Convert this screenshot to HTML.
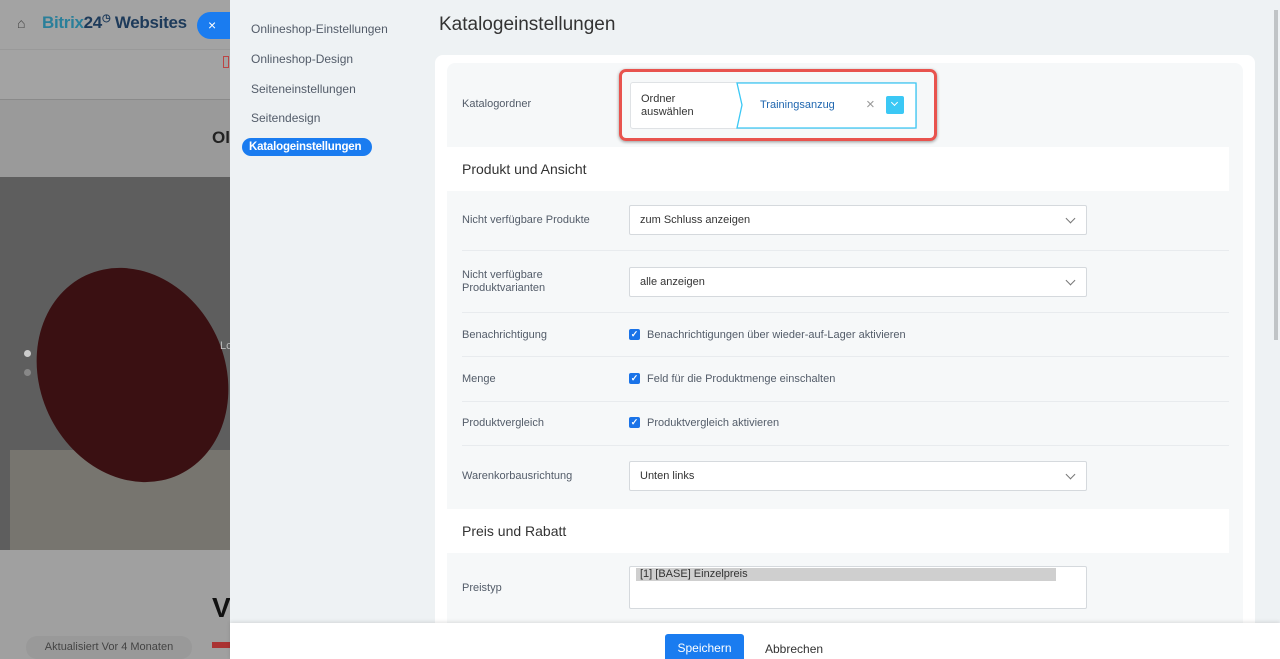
<!DOCTYPE html>
<html><head><meta charset="utf-8"><style>
*{box-sizing:border-box;margin:0;padding:0}
html,body{width:1280px;height:659px;overflow:hidden}
body{position:relative;font-family:"Liberation Sans",sans-serif;background:#9a9a9a}
.a{position:absolute}
.lbl{position:absolute;left:462px;font-size:11px;color:#535c69}
.sel{position:absolute;left:629px;width:458px;height:30px;background:#fff;border:1px solid #d5d9dd;border-radius:2px;font-size:11px;color:#333;padding:0 10px;line-height:28px}
.sel:after{content:"";position:absolute;right:12px;top:9px;width:6px;height:6px;border-right:1.3px solid #777;border-bottom:1.3px solid #777;transform:rotate(45deg)}
.hr{position:absolute;left:462px;width:767px;height:1px;background:#e8ebee}
.cb{position:absolute;left:629px;font-size:11px;color:#535c69;padding-left:18px}
.cb:before{content:"✓";position:absolute;left:0;top:0px;width:11px;height:11px;background:#1a73e8;border-radius:2px;color:#fff;font-size:9px;line-height:11px;text-align:center;font-weight:bold}
.nav{position:absolute;left:251px;font-size:12px;color:#535c69}
.hd{position:absolute;left:447px;width:782px;height:44px;background:#fff;font-size:14px;color:#333;padding-left:15px;line-height:44px}
</style></head><body>
<div class="a" style="left:0;top:0;width:230px;height:100px;background:#a3a3a3"></div>
<div class="a" style="left:0;top:49px;width:230px;height:1px;background:#999"></div>
<div class="a" style="left:0;top:99px;width:230px;height:1px;background:#8a8a8a"></div>
<div class="a" style="left:17px;top:15px;font-size:14px;color:#444">&#8962;</div>
<div class="a" style="left:42px;top:13px;font-size:17px;font-weight:bold;color:#2a7f9a;white-space:nowrap;letter-spacing:-0.3px">Bitrix<span style="color:#1d3a5a">24</span><span style="font-size:10px;vertical-align:top;color:#1d3a5a">&#9719;</span> <span style="color:#1d3a5a">Websites</span></div>
<div class="a" style="left:197px;top:12px;width:40px;height:27px;border-radius:14px 0 0 14px;background:#1a7cf0;color:#fff;font-size:14px;line-height:27px;padding-left:11px">×</div>
<div class="a" style="left:223px;top:56px;width:6px;height:12px;border:1px solid #b44"></div>
<div class="a" style="left:212px;top:128px;font-size:17px;font-weight:bold;color:#222">Ol</div>
<div class="a" style="left:0;top:177px;width:230px;height:373px;background:#5e5e5e"></div>
<div class="a" style="left:10px;top:450px;width:220px;height:100px;background:#77756f"></div>
<div class="a" style="left:40px;top:265px;width:185px;height:220px;border-radius:50%;background:#3a1012;transform:rotate(-25deg)"></div>
<div class="a" style="left:24px;top:350px;width:7px;height:7px;border-radius:50%;background:#ccc"></div>
<div class="a" style="left:24px;top:369px;width:7px;height:7px;border-radius:50%;background:#888"></div>
<div class="a" style="left:220px;top:340px;font-size:11px;color:#bbb">Lc</div>
<div class="a" style="left:0;top:550px;width:230px;height:109px;background:#a0a0a0"></div>
<div class="a" style="left:212px;top:592px;font-size:28px;font-weight:bold;color:#111">V</div>
<div class="a" style="left:26px;top:636px;width:166px;height:23px;border-radius:11px;background:#999;font-size:11px;color:#444;text-align:center;line-height:23px">Aktualisiert Vor 4 Monaten</div>
<div class="a" style="left:212px;top:642px;width:18px;height:6px;background:#a33"></div>
<div class="a" style="left:230px;top:0;width:1050px;height:659px;background:#eef2f4"></div>
<div class="nav" style="top:22px">Onlineshop-Einstellungen</div>
<div class="nav" style="top:52px">Onlineshop-Design</div>
<div class="nav" style="top:82px">Seiteneinstellungen</div>
<div class="nav" style="top:111px">Seitendesign</div>
<div class="a" style="left:242px;top:138px;width:130px;height:18px;border-radius:9px;background:#1a7cf0;color:#fff;font-size:11.5px;font-weight:bold;line-height:18px;padding-left:7px;white-space:nowrap;letter-spacing:-0.2px">Katalogeinstellungen</div>
<div class="a" style="left:439px;top:14px;font-size:19px;color:#333">Katalogeinstellungen</div>
<div class="a" style="left:1274px;top:10px;width:4px;height:330px;background:#c0c4c6"></div>
<div class="a" style="left:435px;top:55px;width:820px;height:604px;background:#fff;border-radius:8px 8px 0 0"></div>
<div class="a" style="left:447px;top:63px;width:796px;height:596px;background:#f6f8f9;border-radius:8px 8px 0 0"></div>
<div class="lbl" style="top:98px">Katalogordner</div>
<div class="a" style="left:619px;top:69px;width:318px;height:72px;border:3px solid #e8534e;border-radius:7px;box-shadow:0 1px 3px rgba(0,0,0,.4)"></div>
<div class="a" style="left:630px;top:82px;width:287px;height:47px;background:#fff;border:1px solid #dfe2e5;border-radius:3px"></div>
<div class="a" style="left:641px;top:93px;font-size:11px;color:#333;line-height:13px">Ordner<br>auswählen</div>
<svg class="a" style="left:736px;top:82px" width="182" height="47"><path d="M1 1H180V46H1L6 23Z" fill="#fff" stroke="#3bc8f5" stroke-width="1.3"/></svg>
<div class="a" style="left:760px;top:99px;font-size:11px;color:#2067b0">Trainingsanzug</div>
<div class="a" style="left:866px;top:96px;font-size:15px;color:#999">×</div>
<div class="a" style="left:886px;top:96px;width:18px;height:18px;border-radius:2px;background:#3bc8f5"></div>
<div class="a" style="left:892px;top:100px;width:5px;height:5px;border-right:1.5px solid #fff;border-bottom:1.5px solid #fff;transform:rotate(45deg)"></div>
<div class="hd" style="top:147px">Produkt und Ansicht</div>
<div class="lbl" style="top:214px">Nicht verfügbare Produkte</div>
<div class="sel" style="top:205px">zum Schluss anzeigen</div>
<div class="hr" style="top:250px"></div>
<div class="lbl" style="top:269px;line-height:13px">Nicht verfügbare<br>Produktvarianten</div>
<div class="sel" style="top:267px">alle anzeigen</div>
<div class="hr" style="top:312px"></div>
<div class="lbl" style="top:329px">Benachrichtigung</div>
<div class="cb" style="top:329px">Benachrichtigungen über wieder-auf-Lager aktivieren</div>
<div class="hr" style="top:356px"></div>
<div class="lbl" style="top:373px">Menge</div>
<div class="cb" style="top:373px">Feld für die Produktmenge einschalten</div>
<div class="hr" style="top:401px"></div>
<div class="lbl" style="top:417px">Produktvergleich</div>
<div class="cb" style="top:417px">Produktvergleich aktivieren</div>
<div class="hr" style="top:445px"></div>
<div class="lbl" style="top:470px">Warenkorbausrichtung</div>
<div class="sel" style="top:461px">Unten links</div>
<div class="hd" style="top:509px">Preis und Rabatt</div>
<div class="lbl" style="top:582px">Preistyp</div>
<div class="a" style="left:629px;top:566px;width:458px;height:43px;background:#fff;border:1px solid #d5d9dd;border-radius:2px"></div>
<div class="a" style="left:636px;top:568px;width:420px;height:13px;background:#cfcfcf;font-size:11px;color:#333;line-height:13px;padding-left:4px">[1] [BASE] Einzelpreis</div>
<div class="a" style="left:230px;top:623px;width:1050px;height:36px;background:#fff;box-shadow:0 -1px 4px rgba(0,0,0,.12)"></div>
<div class="a" style="left:665px;top:634px;width:79px;height:28px;background:#1a7cf0;border-radius:3px;color:#fff;font-size:12px;text-align:center;line-height:28px">Speichern</div>
<div class="a" style="left:765px;top:642px;font-size:12px;color:#333">Abbrechen</div>
</body></html>
